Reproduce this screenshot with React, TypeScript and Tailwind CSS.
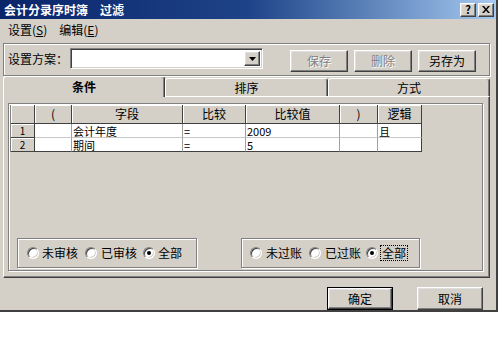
import React from "react";

const raised =
  "border border-t-white border-l-white border-r-[#404040] border-b-[#404040] shadow-[inset_-1px_-1px_0_#808080,inset_1px_1px_0_#dfdfdf]";
const etched = "border border-[#808080] shadow-[inset_1px_1px_0_#fff,1px_1px_0_#fff]";

const Radio: React.FC<{ checked?: boolean; className?: string }> = ({ checked, className }) => (
  <span
    className={
      "relative inline-flex w-[12px] h-[12px] shrink-0 items-center justify-center rounded-full bg-white border border-t-[#808080] border-l-[#808080] border-r-white border-b-white shadow-[inset_1px_1px_0_#404040,inset_-1px_-1px_0_#d4d0c8] " +
      (className ?? "")
    }
  >
    {checked && <span className="w-[4px] h-[4px] rounded-full bg-black" />}
  </span>
);

const cols = [24, 37, 111, 63, 94, 38, 44];
const heads = ["", "(", "字段", "比较", "比较值", ")", "逻辑"];
const rows = [
  ["1", "", "会计年度", "=", "2009", "", "且"],
  ["2", "", "期间", "=", "5", "", ""],
];

const Grid: React.FC = () => (
  <div className="ml-[1px] mt-[1px] w-[413px] border-l border-l-[#808080] text-[12px] text-black">
    <div className="flex h-[19px]">
      {heads.map((h, i) => (
        <div
          key={i}
          style={{ width: cols[i] }}
          className="h-full flex items-center justify-center bg-[#d4d0c8] border-r border-r-[#404040] border-b border-b-[#404040] shadow-[inset_1px_1px_0_#fff] leading-none"
        >
          {h}
        </div>
      ))}
    </div>
    {rows.map((r, ri) => (
      <div key={ri} className="flex h-[14px]">
        {r.map((c, i) =>
          i === 0 ? (
            <div
              key={i}
              style={{ width: cols[i] }}
              className="h-full flex items-center justify-center bg-[#d4d0c8] border-r border-r-[#404040] border-b border-b-[#404040] shadow-[inset_1px_1px_0_#fff] text-[10px] leading-none overflow-hidden"
            >
              {c}
            </div>
          ) : (
            <div
              key={i}
              style={{ width: cols[i] }}
              className={
                "h-full flex items-center bg-white pl-[1px] text-[11px] leading-[12px] overflow-hidden border-r " +
                (i === cols.length - 1 ? "border-r-[#404040] " : "border-r-[#a0a0a0] ") +
                (ri === rows.length - 1 ? "border-b border-b-[#404040]" : "border-b border-b-[#c8c8c8]")
              }
            >
              {c}
            </div>
          )
        )}
      </div>
    ))}
  </div>
);

export default function App() {
  return (
    <div className="w-[500px] h-[355px] bg-white font-['Noto_Sans_CJK_SC','Liberation_Sans',sans-serif] text-[12px] text-black">
      <div className="w-[498px] h-[312px] bg-[#d4d0c8] border-r-2 border-b-2 border-r-[#404040] border-b-[#404040] flex flex-col">
        {/* title bar */}
        <div className="h-[19px] flex items-center justify-between pl-[4px] pr-[2px] bg-linear-to-r from-[#0a246a] via-[#1f4388] to-[#a6caf0]">
          <div className="flex items-center text-white font-bold text-[12px] leading-none">
            <span>会计分录序时簿</span>
            <span className="ml-[12px]">过滤</span>
          </div>
          <div className="flex gap-[2px]">
            <div className={"w-[16px] h-[14px] bg-[#d4d0c8] flex items-center justify-center text-[11px] font-bold leading-none " + raised}>
              ?
            </div>
            <div className={"w-[16px] h-[14px] bg-[#d4d0c8] flex items-center justify-center " + raised}>
              <svg width="8" height="7" viewBox="0 0 8 7">
                <path d="M0 0h2l2 2.5L6 0h2L5 3.5L8 7H6L4 4.5L2 7H0l3-3.5z" fill="#000" />
              </svg>
            </div>
          </div>
        </div>

        {/* menu */}
        <div className="h-[21px] flex items-center pl-[8px] gap-[12px] leading-none">
          <span>
            设置(<u>S</u>)
          </span>
          <span>
            编辑(<u>E</u>)
          </span>
        </div>

        {/* scheme frame */}
        <div className={"ml-[3px] mt-[3px] w-[487px] h-[33px] flex items-start pl-[4px] " + etched}>
          <span className="w-[62px] mt-[9px] leading-none">设置方案：</span>
          <div className="mt-[4px] w-[193px] h-[21px] bg-white border border-t-[#808080] border-l-[#808080] border-r-white border-b-white shadow-[inset_1px_1px_0_#404040,inset_-1px_-1px_0_#d4d0c8] flex justify-end p-[2px]">
            <div className={"w-[16px] h-full bg-[#d4d0c8] flex items-center justify-center " + raised}>
              <svg width="7" height="4" viewBox="0 0 7 4">
                <path d="M0 0h7L3.5 4z" fill="#000" />
              </svg>
            </div>
          </div>
          <div className="ml-[27px] mt-[6px] flex gap-[6px]">
            <div className={"w-[58px] h-[22px] flex items-center justify-center text-[#808080] [text-shadow:1px_1px_0_#fff] " + raised}>
              保存
            </div>
            <div className={"w-[58px] h-[22px] flex items-center justify-center text-[#808080] [text-shadow:1px_1px_0_#fff] " + raised}>
              删除
            </div>
            <div className={"w-[58px] h-[22px] flex items-center justify-center " + raised}>另存为</div>
          </div>
        </div>

        {/* tabs */}
        <div className="ml-[3px] w-[487px] h-[20px] flex items-end">
          <div className="relative z-10 -mb-px w-[162px] h-[21px] bg-[#d4d0c8] border-l border-t border-l-white border-t-white border-r border-r-[#404040] shadow-[inset_-1px_0_0_#808080] rounded-t-[3px] flex items-center justify-center font-bold">
            条件
          </div>
          <div className="w-[163px] h-[18px] bg-[#d4d0c8] border-l border-t border-l-white border-t-white border-r border-r-[#404040] shadow-[inset_-1px_0_0_#808080] rounded-t-[3px] flex items-center justify-center">
            排序
          </div>
          <div className="w-[162px] h-[18px] bg-[#d4d0c8] border-l border-t border-l-white border-t-white border-r border-r-[#404040] shadow-[inset_-1px_0_0_#808080] rounded-t-[3px] flex items-center justify-center">
            方式
          </div>
        </div>

        {/* panel */}
        <div className="ml-[3px] w-[487px] h-[182px] border border-t-white border-l-white border-r-[#404040] border-b-[#404040] shadow-[inset_-1px_-1px_0_#808080] pl-[4px] pt-[6px]">
          <div className={"w-[475px] h-[168px] flex flex-col justify-between " + etched}>
            <Grid />
            <div className="flex pb-[2px] pl-[8px]">
              <div className={"w-[180px] h-[30px] flex items-center " + etched}>
                <Radio className="ml-[9px]" />
                <span className="ml-[3px] leading-none">未审核</span>
                <Radio className="ml-[7px]" />
                <span className="ml-[4px] leading-none">已审核</span>
                <Radio className="ml-[6px]" checked />
                <span className="ml-[3px] leading-none">全部</span>
              </div>
              <div className={"ml-[44px] w-[179px] h-[30px] flex items-center " + etched}>
                <Radio className="ml-[8px]" />
                <span className="ml-[4px] leading-none">未过账</span>
                <Radio className="ml-[7px]" />
                <span className="ml-[4px] leading-none">已过账</span>
                <Radio className="ml-[5px]" checked />
                <span className="ml-[2px] px-[1px] py-[1px] border border-dotted border-black leading-none">全部</span>
              </div>
            </div>
          </div>
        </div>

        {/* bottom buttons */}
        <div className="mt-[9px] flex justify-end pr-[13px] gap-[24px]">
          <div className="w-[66px] h-[23px] border border-black">
            <div className={"w-full h-full flex items-center justify-center " + raised}>确定</div>
          </div>
          <div className={"w-[66px] h-[23px] flex items-center justify-center " + raised}>取消</div>
        </div>
      </div>
    </div>
  );
}
